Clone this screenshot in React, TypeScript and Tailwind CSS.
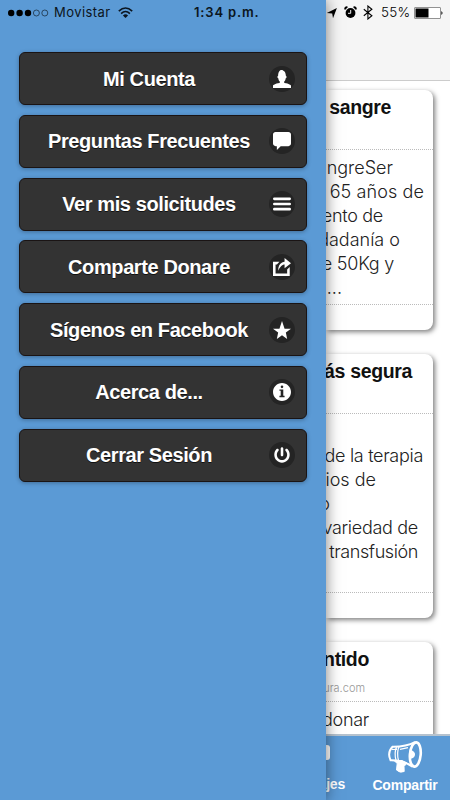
import type { ReactNode } from "react";

const icons: Record<string, ReactNode> = {
  user: (
    <path d="M8.851,10.101c-0.18-0.399-0.2-0.763-0.153-1.104C9.383,8.49,9.738,7.621,9.891,6.465C10.493,6.355,10.5,5.967,10.5,5.5c0-0.437-0.008-0.804-0.502-0.94C9.999,4.539,10,4.521,10,4.5c0-2.103-1-4-2-4C8,0.5,7.5,0,6.5,0C5,0,4,1.877,4,4.5c0,0.021,0.001,0.039,0.002,0.06C3.508,4.696,3.5,5.063,3.5,5.5c0,0.467,0.007,0.855,0.609,0.965C4.262,7.621,4.617,8.49,5.303,8.997c0.047,0.341,0.026,0.704-0.153,1.104C1.503,10.503,0,12,0,12v2h14v-2C14,12,12.497,10.503,8.851,10.101z" />
  ),
  comment: (
    <path d="M12,0H2C0.896,0,0,0.896,0,2v7c0,1.104,0.896,2,2,2h1v3l3-3h6c1.104,0,2-0.896,2-2V2C14,0.896,13.104,0,12,0z" />
  ),
  bars: (
    <path d="M1,4h12a1,1 0 0 0 0-2H1a1,1 0 0 0 0,2zM13,6H1a1,1 0 0 0 0,2h12a1,1 0 0 0 0-2zM13,10H1a1,1 0 0 0 0,2h12a1,1 0 0 0 0-2z" />
  ),
  action: (
    <path d="M9,5v3l5-4L9,0v3c0,0-5,0-5,7C6,5,9,5,9,5z M11,12H2V5h1l2-2H0v11h13V7l-2,2V12z" />
  ),
  star: <path d="M14,6H9L7,0L5,6H0l4,3l-1,5l4-3l4,3l-1-5z" />,
  info: (
    <path
      fillRule="evenodd"
      d="M7,0C3.134,0,0,3.134,0,7s3.134,7,7,7s7-3.134,7-7S10.866,0,7,0z M7,2c0.552,0,1,0.447,1,1S7.552,4,7,4S6,3.553,6,3S6.448,2,7,2z M9,11H5v-1h1V6H5V5h3v5h1V11z"
    />
  ),
  power: (
    <path d="M11.243,2.408c-0.392-0.401-1.024-0.401-1.415,0c-0.391,0.401-0.391,1.054,0,1.455C10.584,4.642,11,5.675,11,6.777s-0.416,2.136-1.172,2.914c-1.512,1.558-4.146,1.558-5.656,0C3.416,8.913,3,7.88,3,6.777c0-1.103,0.416-2.136,1.172-2.914c0.391-0.401,0.391-1.054,0-1.455c-0.391-0.401-1.023-0.401-1.415,0C1.624,3.574,1,5.125,1,6.777c0,1.651,0.624,3.203,1.757,4.369C3.891,12.312,5.397,12.954,7,12.954s3.109-0.642,4.243-1.809C12.376,9.98,13,8.429,13,6.777C13,5.125,12.376,3.574,11.243,2.408z M7,8.053c0.553,0,1-0.454,1-1.022v-5.01C8,1.453,7.553,1,7,1S6,1.453,6,2.021v5.01C6,7.599,6.447,8.053,7,8.053z" />
  ),
};

const menu = [
  { label: "Mi Cuenta", icon: "user" },
  { label: "Preguntas Frecuentes", icon: "comment" },
  { label: "Ver mis solicitudes", icon: "bars" },
  { label: "Comparte Donare", icon: "action" },
  { label: "Sígenos en Facebook", icon: "star" },
  { label: "Acerca de...", icon: "info" },
  { label: "Cerrar Sesión", icon: "power" },
];

function MenuButton({ label, icon }: { label: string; icon: string }) {
  return (
    <button className="flex h-[53px] w-full shrink-0 items-center rounded-[6px] border border-[#1a1414] bg-[#333] pr-[11px] shadow-[0_1px_4px_rgba(0,0,0,0.3)]">
      <span className="flex-1 pl-[9px] text-center text-[20px] leading-6 font-bold tracking-[-0.4px] whitespace-nowrap text-white [text-shadow:0_1px_0_#111]">
        {label}
      </span>
      <span className="flex size-[26px] items-center justify-center rounded-full bg-[#242424]">
        <svg className="size-[18px]" viewBox="0 0 14 14" fill="#fff">
          {icons[icon]}
        </svg>
      </span>
    </button>
  );
}

function Drawer() {
  return (
    <aside className="z-10 flex w-[326px] shrink-0 flex-col bg-[#5b9ad5] shadow-[0_0_14px_rgba(0,0,0,0.5)]">
      <div className="flex h-[25px] items-center pl-[8px] font-['Inter',sans-serif] text-[13px] text-[#0b1520]">
        <svg className="mr-[5px] h-[8px] w-[41px]" viewBox="0 0 41 8">
          <g fill="#000">
            <circle cx="3.2" cy="4" r="3.2" />
            <circle cx="11.6" cy="4" r="3.2" />
            <circle cx="20" cy="4" r="3.2" />
          </g>
          <g fill="none" stroke="#14222f" strokeWidth="0.7">
            <circle cx="28.4" cy="4" r="3" />
            <circle cx="36.8" cy="4" r="3" />
          </g>
        </svg>
        <span className="w-[64px] tracking-[0.45px]">Movistar</span>
        <svg className="h-[12px] w-[15px]" viewBox="0 0 15 12" fill="none" stroke="#0b1520" strokeWidth="1.6">
          <path d="M0.8,4.2Q7.5,-2.2 14.2,4.2M3.1,6.6Q7.5,2.4 11.9,6.6" />
          <path d="M7.5,11L4.9,8.4Q7.5,6.3 10.1,8.4z" fill="#0b1520" stroke="none" />
        </svg>
        <span className="ml-[61px] font-semibold tracking-[0.85px] whitespace-nowrap">1:34 p.m.</span>
      </div>
      <nav className="flex flex-col gap-[9.8px] pt-[27px] pr-[19px] pl-[19px]">
        {menu.map((item) => (
          <MenuButton key={item.label} label={item.label} icon={item.icon} />
        ))}
      </nav>
    </aside>
  );
}

function Line({ children, className }: { children: ReactNode; className: string }) {
  return <p className={`flex h-6 items-center justify-end whitespace-nowrap ${className}`}>{children}</p>;
}

const card =
  "mr-[17px] shrink-0 rounded-r-[8px] bg-white shadow-[2px_2px_5px_rgba(0,0,0,0.5)]";
const title = "text-[19.5px] font-bold tracking-[-0.35px] text-[#111]";
const body = "font-['Inter',sans-serif] text-[18px] font-light text-[#222]";
const divider = "border-b border-dotted border-[#bbb]";

function Content() {
  return (
    <main className="flex min-w-0 flex-1 flex-col overflow-hidden bg-white">
      <header className="h-[81px] shrink-0 border-b border-[#ccc] bg-[#f5f5f5]">
        <div className="flex h-[25px] items-center font-['Inter',sans-serif] text-[13px] text-black">
          <svg className="h-[12px] w-[11px]" viewBox="0 0 11 12">
            <path d="M10.9,1L7,11.2L6.2,6.6L0.8,6z" />
          </svg>
          <svg className="ml-[7px] h-[13px] w-[13px]" viewBox="0 0 13 13">
            <path d="M1,4A2.1,2.1 0 0 1 4,1zM12,4A2.1,2.1 0 0 0 9,1z" />
            <circle cx="6.5" cy="7" r="4.9" />
            <path d="M6.7,4V7.3H4" stroke="#f5f5f5" fill="none" />
          </svg>
          <svg className="ml-[6px] h-[15px] w-[10px]" viewBox="0 0 10 15" fill="none" stroke="#000" strokeWidth="1.1">
            <path d="M0.8,4.2L8.9,10.8L4.9,14V1L8.9,4.2L0.8,10.8" />
          </svg>
          <span className="ml-[8px] w-[29px] text-[13.5px] font-light tracking-[0.3px]">55%</span>
          <svg className="ml-[4px] h-[12px] w-[29px]" viewBox="0 0 29 12">
            <rect x="0.5" y="0.5" width="26" height="11" rx="0.5" fill="#fff" stroke="#777" strokeWidth="0.8" />
            <rect x="1.5" y="1.5" width="13" height="9" />
            <path d="M27.4,4Q29.6,6 27.4,8z" />
          </svg>
        </div>
      </header>
      <div className="flex min-h-0 flex-1 flex-col gap-[24px] overflow-hidden pt-[9px]">
        <article className={`${card} h-[240px]`}>
          <div className={`h-[60px] pt-[6px] ${divider}`}>
            <Line className={`${title} pr-[42px]`}>sangre</Line>
          </div>
          <div className={`h-[155px] pt-[5px] ${divider}`}>
            <Line className={`${body} tracking-[0px] pr-[40px]`}>sangreSer</Line>
            <Line className={`${body} tracking-[0.1px] pr-[9px]`}>65 años de</Line>
            <Line className={`${body} tracking-[-0.3px] pr-[50px]`}>ento de</Line>
            <Line className={`${body} tracking-[0px] pr-[33px]`}>dadanía o</Line>
            <Line className={`${body} tracking-[-0.25px] pr-[39px]`}>e 50Kg y</Line>
            <Line className={`${body} tracking-[0px] pr-[91px]`}>...</Line>
          </div>
        </article>
        <article className={`${card} h-[264px]`}>
          <div className={`h-[60px] pt-[6px] ${divider}`}>
            <Line className={`${title} pr-[21px]`}>más segura</Line>
          </div>
          <div className={`h-[179px] pt-[29px] ${divider}`}>
            <Line className={`${body} tracking-[-0.3px] pr-[10px]`}>de la terapia</Line>
            <Line className={`${body} tracking-[0px] pr-[57px]`}>rios de</Line>
            <Line className={`${body} tracking-[0px] pr-[103px]`}>o</Line>
            <Line className={`${body} tracking-[-0.3px] pr-[15px]`}>variedad de</Line>
            <Line className={`${body} tracking-[-0.4px] pr-[15px]`}>transfusión</Line>
          </div>
        </article>
        <article className={`${card} h-[240px]`}>
          <div className={`h-[60px] pt-[6px] ${divider}`}>
            <Line className={`${title} pr-[64px]`}>sentido</Line>
            <Line className="-mt-[2px] h-[34px] pr-[68px] pt-[2px] font-['Inter',sans-serif] text-[11px] font-light text-[#999]">
              segura.com
            </Line>
          </div>
          <div className="pt-[5px]">
            <Line className={`${body} tracking-[-0.3px] pr-[64px]`}>donar</Line>
          </div>
        </article>
      </div>
      <footer className="z-[1] flex h-[66px] shrink-0 border-t-2 border-[#b5c2ce] bg-[#5b9ad5] text-[14px] font-bold tracking-[-0.2px] text-white">
        <div className="flex w-[34px] flex-col items-end">
          <span className="mt-[9px] mr-[30px] h-[15px] w-[10px] rounded-[3px] bg-white" />
          <span className="mt-[14px] mr-[15px] leading-5 whitespace-nowrap">Mensajes</span>
        </div>
        <div className="flex flex-1 flex-col items-center pt-[4px]">
          <svg className="h-[35px] w-[36px]" viewBox="0 0 36 35" fill="none" stroke="#fff" strokeWidth="2">
            <path d="M28,2.2Q19,7 5.5,6.8Q0,12.5 3.5,20.2Q17,20 25.5,26.8" />
            <ellipse cx="28.3" cy="14.5" rx="5.4" ry="12.2" strokeWidth="2.6" transform="rotate(5 28.3 14.5)" />
            <path d="M9.5,7Q7,13 9,20M12,6.5Q9.5,13 11.5,20.5M5,9.5L10,9.3M13,9.3L21,7.6" strokeWidth="1.2" />
            <path d="M22.6,9.5Q28.5,11 28,15Q27.5,18.5 22.4,19z" fill="#fff" stroke="none" />
            <path d="M7,20.5L10.2,23.5L9.5,30Q13,33.5 17.2,31.5L17,26.5L20,23L15,20.5z" fill="#fff" strokeWidth="1" strokeLinejoin="round" />
          </svg>
          <span className="leading-5">Compartir</span>
        </div>
      </footer>
    </main>
  );
}

export default function App() {
  return (
    <div className="flex h-[800px] w-[450px] overflow-hidden bg-white font-['Liberation_Sans',Arial,sans-serif]">
      <Drawer />
      <Content />
    </div>
  );
}
